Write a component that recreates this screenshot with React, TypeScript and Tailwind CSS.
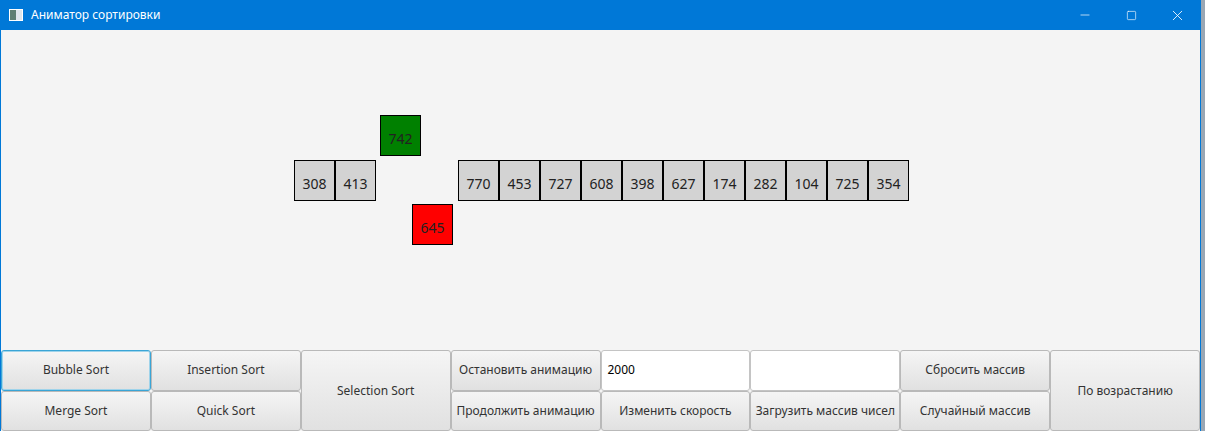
import { Minus, Square, X } from "lucide-react";

const left = [308, 413];
const right = [770, 453, 727, 608, 398, 627, 174, 282, 104, 725, 354];

function Box({ value, color = "bg-[#d3d3d3]" }: { value: number; color?: string }) {
  return (
    <div
      className={`flex h-[41px] w-[41px] items-center justify-center border border-black pt-[6px] text-[14px] text-[#222] ${color}`}
    >
      {value}
    </div>
  );
}

function Btn({ label, focused, className = "" }: { label: string; focused?: boolean; className?: string }) {
  return (
    <button
      className={`flex items-center justify-center rounded-[3px] border bg-gradient-to-b from-[#f5f5f5] to-[#e1e1e1] text-[12px] text-[#333] ${
        focused ? "border-[#3aa5d6] shadow-[inset_0_0_0_1px_#9fd3ea]" : "border-[#b9b9b9]"
      } ${className}`}
    >
      {label}
    </button>
  );
}

function Field({ value }: { value: string }) {
  return (
    <div className="flex items-center rounded-[3px] border border-[#c4c4c4] bg-white px-[6px] text-[12px] text-black">
      {value}
    </div>
  );
}

export default function App() {
  return (
    <div className="flex h-[431px] w-[1205px] overflow-hidden bg-[#9aa7b4] font-['Noto_Sans',sans-serif]">
      <div className="flex h-full w-[1201px] flex-col border-x border-[#0078d7] bg-[#f4f4f4]">
        {/* title bar */}
        <div className="flex h-[30px] shrink-0 items-center bg-[#0078d7] text-white">
          <div className="ml-[8px] flex h-[12px] w-[14px] border border-white bg-[#dfe6ec]">
            <div className="h-full w-[6px] bg-[#5e7f73]" />
          </div>
          <span className="ml-[8px] text-[12px]">Аниматор сортировки</span>
          <div className="ml-auto flex h-full">
            <div className="flex w-[46px] items-center justify-center">
              <Minus size={14} strokeWidth={1.2} />
            </div>
            <div className="flex w-[46px] items-center justify-center">
              <Square size={11} strokeWidth={1.4} />
            </div>
            <div className="flex w-[46px] items-center justify-center">
              <X size={17} strokeWidth={1.2} />
            </div>
          </div>
        </div>

        {/* animation canvas */}
        <div className="relative h-[320px] shrink-0">
          <div className="absolute left-[293px] top-[130px] flex">
            {left.map((v) => (
              <Box key={v} value={v} />
            ))}
            <div className="w-[82px]" />
            {right.map((v) => (
              <Box key={v} value={v} />
            ))}
          </div>
          <div className="absolute left-[379px] top-[85px]">
            <Box value={742} color="bg-[#008000]" />
          </div>
          <div className="absolute left-[411px] top-[174px]">
            <Box value={645} color="bg-[#ff0000]" />
          </div>
        </div>

        {/* controls */}
        <div className="grid h-[81px] grid-cols-8 grid-rows-2">
          <Btn label="Bubble Sort" focused />
          <Btn label="Insertion Sort" />
          <Btn label="Selection Sort" className="row-span-2" />
          <Btn label="Остановить анимацию" />
          <Field value="2000" />
          <Field value="" />
          <Btn label="Сбросить массив" />
          <Btn label="По возрастанию" className="row-span-2" />
          <Btn label="Merge Sort" />
          <Btn label="Quick Sort" />
          <Btn label="Продолжить анимацию" />
          <Btn label="Изменить скорость" />
          <Btn label="Загрузить массив чисел" />
          <Btn label="Случайный массив" />
        </div>
      </div>
    </div>
  );
}
